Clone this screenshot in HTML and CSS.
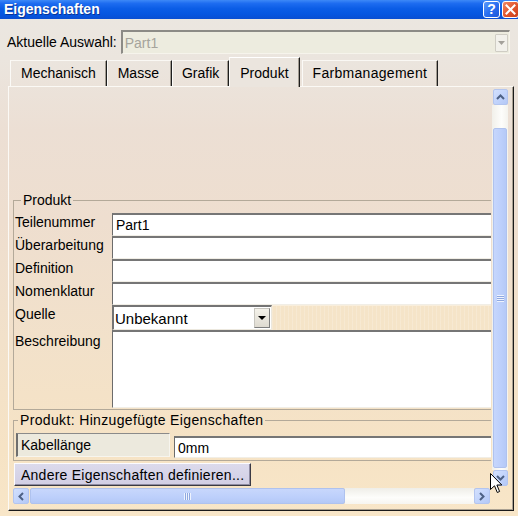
FILE: index.html
```html
<!DOCTYPE html>
<html lang="de">
<head>
<meta charset="utf-8">
<title>Eigenschaften</title>
<link rel="stylesheet" href="styles.css">
</head>
<body>
<div class="window">
  <div class="titlebar">
    <span class="title">Eigenschaften</span>
    <div class="tbtns">
      <span class="tbtn help">?</span>
      <span class="tbtn close"><svg width="15" height="15" viewBox="0 0 15 15"><path d="M3.5 3.5 L11.5 11.5 M11.5 3.5 L3.5 11.5" stroke="#fff" stroke-width="2" stroke-linecap="square"/></svg></span>
    </div>
  </div>

  <div class="selrow">
    <span class="sel-label">Aktuelle Auswahl:</span>
    <div class="sel-combo">
      <span class="sel-value">Part1</span>
      <span class="sel-dd"><svg width="7" height="4" viewBox="0 0 7 4"><path d="M0 0 H7 L3.5 4 Z" fill="#a3a19a"/></svg></span>
    </div>
  </div>

  <div class="tabs">
    <div class="tab">Mechanisch</div>
    <div class="tab tab-wide">Masse</div>
    <div class="tab tab-narrow">Grafik</div>
    <div class="tab active">Produkt</div>
    <div class="tab tab-spaced">Farbmanagement</div>
  </div>

  <div class="panel">
    <div class="mainrow">
      <div class="viewport">
        <div class="content">
          <fieldset class="group">
            <legend>Produkt</legend>
            <div class="form">
              <div class="lbl">Teilenummer</div>
              <div class="field">Part1</div>
              <div class="lbl">Überarbeitung</div>
              <div class="field"></div>
              <div class="lbl">Definition</div>
              <div class="field"></div>
              <div class="lbl">Nomenklatur</div>
              <div class="field"></div>
              <div class="lbl">Quelle</div>
              <div class="quelle-cell">
                <div class="combo">
                  <span class="combo-value">Unbekannt</span>
                  <span class="combo-dd"><svg width="8" height="4" viewBox="0 0 8 4"><path d="M0 0 H8 L4 4 Z" fill="#000"/></svg></span>
                </div>
                <div class="filler"></div>
              </div>
              <div class="lbl lbl-area">Beschreibung</div>
              <div class="field area"></div>
            </div>
          </fieldset>

          <fieldset class="group group2">
            <legend>Produkt: Hinzugefügte Eigenschaften</legend>
            <div class="addrow">
              <div class="kab">Kabellänge</div>
              <div class="field val">0mm</div>
            </div>
          </fieldset>

          <button class="btn" type="button">Andere Eigenschaften definieren...</button>
        </div>
      </div>

      <div class="vscroll">
        <div class="sbtn vbtn"><svg width="9" height="6" viewBox="0 0 9 6"><path d="M1 5 L4.5 1.5 L8 5" fill="none" stroke="#4d6185" stroke-width="2"/></svg></div>
        <div class="vtrack">
          <div class="vthumb"><span class="vgrip"></span></div>
        </div>
        <div class="sbtn vbtn"><svg width="9" height="6" viewBox="0 0 9 6"><path d="M1 1 L4.5 4.5 L8 1" fill="none" stroke="#4d6185" stroke-width="2"/></svg></div>
      </div>
    </div>

    <div class="hrow">
      <div class="hscroll">
        <div class="sbtn hbtn"><svg width="6" height="9" viewBox="0 0 6 9"><path d="M5 1 L1.5 4.5 L5 8" fill="none" stroke="#4d6185" stroke-width="2"/></svg></div>
        <div class="hthumb"><span class="hgrip"></span></div>
        <div class="htrack"></div>
        <div class="sbtn hbtn"><svg width="6" height="9" viewBox="0 0 6 9"><path d="M1 1 L4.5 4.5 L1 8" fill="none" stroke="#4d6185" stroke-width="2"/></svg></div>
      </div>
    </div>
  </div>

  <svg class="cursor" width="13" height="21" viewBox="0 0 13 21"><path d="M0.5 0.5 L0.5 16.5 L4.5 12.8 L7.3 19.5 L9.6 18.5 L6.9 12 L11.8 12 Z" fill="#fff" stroke="#000" stroke-width="1" stroke-linejoin="miter"/></svg>
</div>
</body>
</html>
```

FILE: styles.css
```css
* { box-sizing: border-box; }

html, body {
  margin: 0;
  padding: 0;
}

body {
  width: 518px;
  height: 516px;
  overflow: hidden;
  font-family: "Liberation Sans", Arial, sans-serif;
  font-size: 14px;
  color: #000;
  background: #ebe6e0;
}

.window {
  position: relative;
  width: 518px;
  height: 516px;
  display: flex;
  flex-direction: column;
  background: linear-gradient(to bottom,
    #ebe7e1 0px, #ebe5de 60px, #ecdfd4 130px, #eedecf 220px,
    #f2e1ca 340px, #f6e3c5 450px, #f8e6c8 516px);
}

/* ---------- title bar ---------- */
.titlebar {
  flex: none;
  height: 19px;
  display: flex;
  align-items: center;
  padding-left: 4px;
  background: linear-gradient(to bottom,
    #3d89f7 0%, #1d6cf0 18%, #0b5de6 45%, #0656e0 75%, #0a4fd2 100%);
}

.title {
  color: #fff;
  font-weight: bold;
  font-size: 14px;
  line-height: 19px;
  text-shadow: 1px 1px 0 #0b3596;
}

.tbtns {
  margin-left: auto;
  margin-right: -1px;
  display: flex;
  gap: 2px;
}

.tbtn {
  width: 17px;
  height: 17px;
  border: 1px solid #fff;
  border-radius: 3px;
  display: flex;
  align-items: center;
  justify-content: center;
  color: #fff;
  font-weight: bold;
  font-size: 14px;
  line-height: 15px;
}

.help {
  background: linear-gradient(135deg, #5b9bfb 0%, #2a6ff0 50%, #1b56d8 100%);
}

.close {
  background: linear-gradient(135deg, #f08a68 0%, #e2572f 50%, #c9401c 100%);
}

/* ---------- selection row ---------- */
.selrow {
  flex: none;
  display: flex;
  align-items: center;
  height: 24px;
  margin-top: 11px;
  margin-bottom: 3px;
  padding-left: 7px;
  padding-right: 8px;
}

.sel-label {
  line-height: 16px;
}

.sel-combo {
  flex: 1;
  height: 24px;
  margin-left: 4px;
  display: flex;
  align-items: center;
  background: #edecdf;
  border-top: 2px solid #8c8b86;
  border-left: 2px solid #8c8b86;
  border-bottom: 1px solid #f6f4ec;
  border-right: 1px solid #f6f4ec;
}

.sel-value {
  flex: 1;
  padding-left: 2px;
  color: #a6a49c;
  line-height: 18px;
}

.sel-dd {
  width: 13px;
  height: 18px;
  margin-right: 1px;
  display: flex;
  align-items: center;
  justify-content: center;
  background: #f2f1eb;
  border: 1px solid #cfcdc4;
  border-radius: 1px;
}

/* ---------- tabs ---------- */
.tabs {
  flex: none;
  height: 29px;
  display: flex;
  align-items: flex-end;
  padding-left: 10px;
}

.tab {
  height: 26px;
  line-height: 24px;
  padding: 0 10px;
  border-top: 1px solid #faf8f4;
  border-left: 1px solid #fbfaf7;
  border-right: 1px solid #1e1e1e;
  box-shadow: inset -1px 0 0 #a29b90;
  white-space: nowrap;
}

.tab-wide {
  padding: 0 12px 0 10px;
}

.tab-narrow {
  padding: 0 9px;
}

.tab-spaced {
  margin-left: 2px;
  letter-spacing: 0.3px;
}

.tab.active {
  position: relative;
  z-index: 1;
  height: 30px;
  margin-bottom: -1px;
  padding-top: 3px;
  line-height: 24px;
  background: #ebe5de;
  border-top: 1px solid #fff;
}

/* ---------- panel ---------- */
.panel {
  flex: none;
  width: 506px;
  height: 425px;
  margin-left: 8px;
  padding: 1px 5px 6px 4px;
  border-top: 1px solid #fbf9f5;
  border-left: 1px solid #fbf9f5;
  border-right: 1px solid #1a1a1a;
  border-bottom: 1px solid #1a1a1a;
  box-shadow: inset -1px -1px 0 #aaa192;
  display: flex;
  flex-direction: column;
}

.mainrow {
  display: flex;
  height: 398px;
}

.viewport {
  width: 478px;
  height: 398px;
  overflow: hidden;
}

.content {
  width: 540px;
  padding-top: 104px;
}

/* ---------- group boxes ---------- */
.group {
  margin: 0;
  padding: 5px 0 1px 0;
  min-width: 0;
  border: 1px solid #b3a999;
  border-right: none;
}

.group legend {
  margin-left: 7px;
  padding: 0 2px;
  line-height: 16px;
  font-size: 14px;
}

.group2 {
  margin-top: 2px;
  padding-bottom: 2px;
}

.group2 legend {
  margin-left: 4px;
  letter-spacing: 0.35px;
}

.form {
  display: grid;
  grid-template-columns: 98px 1fr;
  grid-template-rows: 23px 23px 23px 23px 25px 78px;
}

.lbl {
  padding-left: 1px;
  padding-top: 1px;
  line-height: 16px;
  white-space: nowrap;
}

.lbl-area {
  padding-top: 3px;
}

.field {
  background: #fff;
  border-top: 2px solid #767676;
  border-left: 1px solid #6c6c6c;
  border-bottom: 1px solid #f1eee6;
  padding-left: 3px;
  line-height: 20px;
}

.quelle-cell {
  display: flex;
}

.combo {
  width: 160px;
  height: 25px;
  display: flex;
  align-items: center;
  background: #fff;
  border-top: 2px solid #747474;
  border-left: 2px solid #747474;
  border-bottom: 1px solid #ece8de;
  border-right: 1px solid #ece8de;
}

.combo-value {
  flex: 1;
  padding-left: 1px;
  font-size: 15px;
  line-height: 20px;
  padding-top: 2px;
}

.combo-dd {
  width: 16px;
  height: 20px;
  margin-right: 1px;
  display: flex;
  align-items: center;
  justify-content: center;
  background: linear-gradient(to bottom, #f4f2ea, #dedad0);
  border: 1px solid #7e7e7e;
  border-top-color: #c8c6bf;
  border-left-color: #c8c6bf;
}

.filler {
  flex: 1;
  background-color: #f5e4c8;
  background-image: repeating-linear-gradient(90deg, rgba(255,255,255,0.18) 0 1px, transparent 1px 4px);
  border-top: 1px solid #f9eedc;
}

.area {
  border-top-width: 2px;
}

/* ---------- added properties ---------- */
.addrow {
  display: flex;
  height: 25px;
}

.kab {
  width: 154px;
  height: 24px;
  margin-left: 2px;
  padding-left: 3px;
  line-height: 22px;
  background: #ece9dd;
  border-top: 1px solid #8a8a8a;
  border-left: 2px solid #6f6f6f;
  border-bottom: 1px solid #f7f5ee;
  border-right: 1px solid #f7f5ee;
}

.val {
  flex: 1;
  height: 22px;
  margin-left: 4px;
  margin-top: 3px;
}

.btn {
  display: block;
  width: 237px;
  height: 23px;
  margin: 2px 0 0 1px;
  padding: 0 0 0 6px;
  text-align: left;
  font-family: "Liberation Sans", Arial, sans-serif;
  font-size: 14px;
  letter-spacing: 0.25px;
  line-height: 20px;
  color: #000;
  background: linear-gradient(to bottom, #dcdaec, #d1cee4);
  border-top: 1px solid #fbfbff;
  border-left: 1px solid #fbfbff;
  border-right: 1px solid #3a3a44;
  border-bottom: 1px solid #3a3a44;
  box-shadow: inset -1px -1px 0 #8f8ca3;
}

/* ---------- scrollbars ---------- */
.sbtn {
  display: flex;
  align-items: center;
  justify-content: center;
  background: linear-gradient(135deg, #d3e0fd 0%, #c1d3fb 55%, #b4c8f6 100%);
  border: 1px solid #b3c5ef;
  border-radius: 2px;
}

.vscroll {
  width: 16px;
  height: 398px;
  margin-left: 1px;
  display: flex;
  flex-direction: column;
}

.vbtn {
  width: 15px;
  height: 16px;
  margin-left: 1px;
}

.vscroll .vbtn:first-child {
  margin-top: 1px;
}

.vtrack {
  flex: 1;
  padding-top: 23px;
  background: linear-gradient(to right, #f1f0ea, #fdfdfb 60%, #f4f3ee);
}

.vthumb {
  width: 14px;
  height: 340px;
  margin-left: 1px;
  display: flex;
  align-items: center;
  justify-content: center;
  background: linear-gradient(to right, #c6d6fc, #bccffb 60%, #b5c9f7);
  border: 1px solid #afc2ee;
  border-radius: 2px;
}

.vgrip {
  width: 7px;
  height: 7px;
  background: repeating-linear-gradient(to bottom, #eef3fe 0 1px, #8fa8e0 1px 2px);
}

.hrow {
  margin-top: 2px;
  height: 16px;
  display: flex;
}

.hscroll {
  width: 477px;
  height: 16px;
  display: flex;
}

.hbtn {
  width: 16px;
  height: 16px;
}

.hthumb {
  width: 315px;
  margin-left: 1px;
  display: flex;
  align-items: center;
  justify-content: center;
  background: linear-gradient(to bottom, #c8d7fc, #bccffb 60%, #b4c8f6);
  border: 1px solid #afc2ee;
  border-radius: 2px;
}

.hgrip {
  width: 7px;
  height: 7px;
  background: repeating-linear-gradient(to right, #eef3fe 0 1px, #8fa8e0 1px 2px);
}

.htrack {
  flex: 1;
  background: linear-gradient(to bottom, #efeee8, #fdfdfb 60%, #f6f5f0);
}

/* ---------- mouse pointer overlay ---------- */
.cursor {
  position: absolute;
  left: 490px;
  top: 473px;
}
```
